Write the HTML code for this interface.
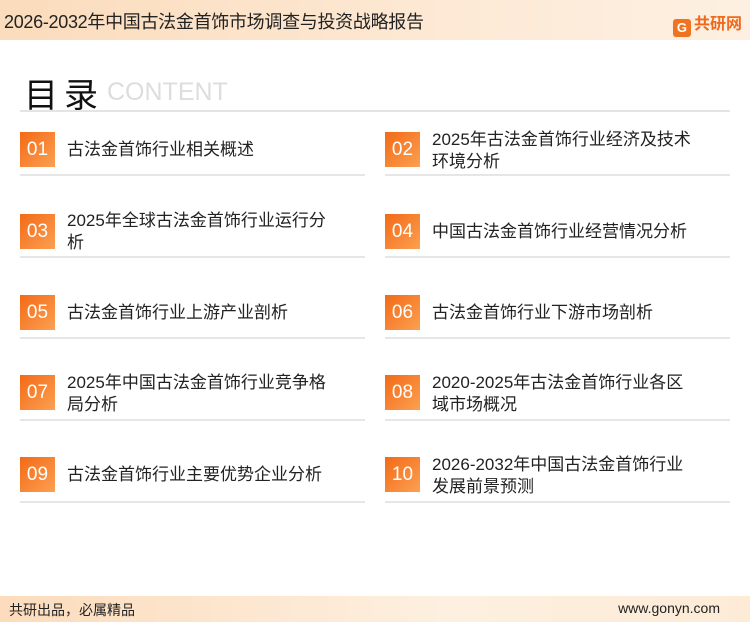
<!DOCTYPE html>
<html><head><meta charset="utf-8"><style>
*{margin:0;padding:0;box-sizing:border-box}
body{width:750px;height:622px;position:relative;background:#fff;font-family:"Liberation Sans","Noto Sans CJK SC",sans-serif;overflow:hidden;color:#222}
.hdr{position:absolute;left:0;top:0;width:750px;height:40px;background:linear-gradient(90deg,#fbdcbc,#fde9d5 60%,#fdf0e2)}
.hdr .t{position:absolute;left:4px;top:8px;font-size:18px;color:#222;letter-spacing:-0.3px}
.logo{position:absolute;right:8px;top:10px;font-size:16px;font-weight:bold;color:#ef6a1c}
.logo b{display:inline-block;width:18px;height:18px;background:#f07420;border-radius:3px;vertical-align:-3px;margin-right:3px;color:#fff;font-size:13px;text-align:center;line-height:18px}
.ttl{position:absolute;left:24px;top:68px;font-size:34px;color:#111;letter-spacing:6px}
.ct{position:absolute;left:107px;top:78px;font-size:25px;color:#ddd}
.hl{position:absolute;left:20px;top:110px;width:710px;height:2px;background:#e4e4e4}
.box{position:absolute;width:35px;height:35px;background:linear-gradient(135deg,#f26a16,#fca052);color:#fff;font-size:19px;text-align:center;line-height:35px}
.tx{position:absolute;font-size:17px;line-height:22px;color:#222}
.ln{position:absolute;height:2px;width:345px;background:#e6e6e6}
.ftr{position:absolute;left:0;top:596px;width:750px;height:26px;background:linear-gradient(90deg,#fcdcbc,#fdf0e0 60%,#fdebd6)}
.ftr .l{position:absolute;left:9px;top:4px;font-size:14px}
.ftr .r{position:absolute;right:30px;top:4px;font-size:14px}
</style></head><body>
<div class="hdr"><div class="t">2026-2032年中国古法金首饰市场调查与投资战略报告</div><div class="logo"><b>G</b>共研网</div></div>
<div class="ttl">目录</div><div class="ct">CONTENT</div>
<div class="hl"></div>

<div class="box" style="left:20px;top:132px">01</div><div class="tx" style="left:67px;top:139px">古法金首饰行业相关概述</div><div class="ln" style="left:20px;top:174px"></div>
<div class="box" style="left:385px;top:132px">02</div><div class="tx" style="left:432px;top:129px">2025年古法金首饰行业经济及技术<br>环境分析</div><div class="ln" style="left:385px;top:174px"></div>

<div class="box" style="left:20px;top:214px">03</div><div class="tx" style="left:67px;top:210px">2025年全球古法金首饰行业运行分<br>析</div><div class="ln" style="left:20px;top:256px"></div>
<div class="box" style="left:385px;top:214px">04</div><div class="tx" style="left:432px;top:221px">中国古法金首饰行业经营情况分析</div><div class="ln" style="left:385px;top:256px"></div>

<div class="box" style="left:20px;top:295px">05</div><div class="tx" style="left:67px;top:302px">古法金首饰行业上游产业剖析</div><div class="ln" style="left:20px;top:337px"></div>
<div class="box" style="left:385px;top:295px">06</div><div class="tx" style="left:432px;top:302px">古法金首饰行业下游市场剖析</div><div class="ln" style="left:385px;top:337px"></div>

<div class="box" style="left:20px;top:375px">07</div><div class="tx" style="left:67px;top:372px">2025年中国古法金首饰行业竞争格<br>局分析</div><div class="ln" style="left:20px;top:419px"></div>
<div class="box" style="left:385px;top:375px">08</div><div class="tx" style="left:432px;top:372px">2020-2025年古法金首饰行业各区<br>域市场概况</div><div class="ln" style="left:385px;top:419px"></div>

<div class="box" style="left:20px;top:457px">09</div><div class="tx" style="left:67px;top:464px">古法金首饰行业主要优势企业分析</div><div class="ln" style="left:20px;top:501px"></div>
<div class="box" style="left:385px;top:457px">10</div><div class="tx" style="left:432px;top:454px">2026-2032年中国古法金首饰行业<br>发展前景预测</div><div class="ln" style="left:385px;top:501px"></div>

<div class="ftr"><div class="l">共研出品，必属精品</div><div class="r">www.gonyn.com</div></div>
</body></html>
